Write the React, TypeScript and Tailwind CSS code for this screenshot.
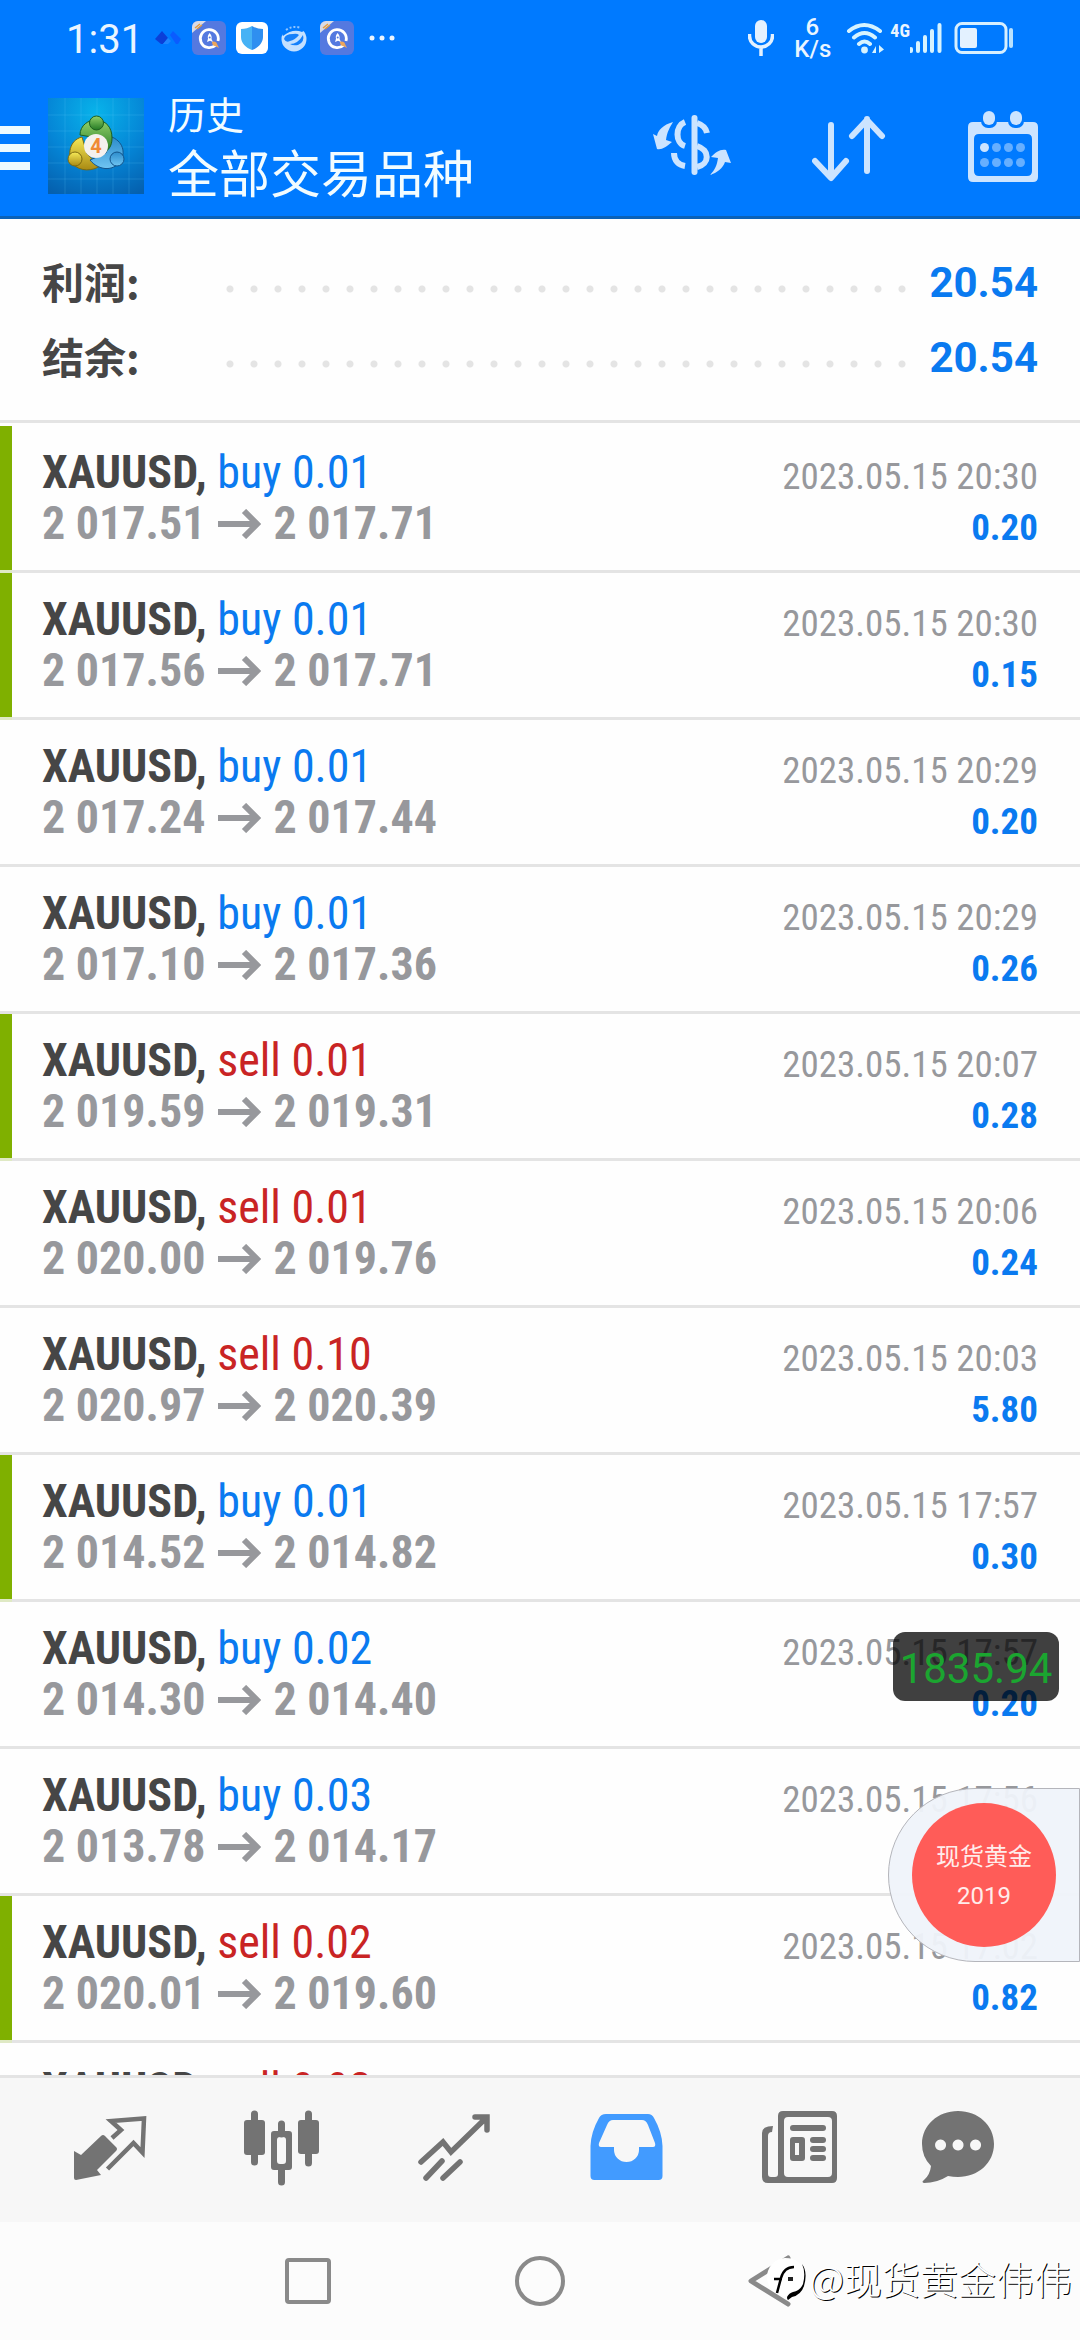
import type { ReactNode } from 'react';

type Deal = {
  side: 'buy' | 'sell';
  volume: string;
  open: string;
  close: string;
  time: string;
  profit: string;
  marked?: boolean;
};

const deals: Deal[] = [
  { side: 'buy', volume: '0.01', open: '2 017.51', close: '2 017.71', time: '2023.05.15 20:30', profit: '0.20', marked: true },
  { side: 'buy', volume: '0.01', open: '2 017.56', close: '2 017.71', time: '2023.05.15 20:30', profit: '0.15', marked: true },
  { side: 'buy', volume: '0.01', open: '2 017.24', close: '2 017.44', time: '2023.05.15 20:29', profit: '0.20' },
  { side: 'buy', volume: '0.01', open: '2 017.10', close: '2 017.36', time: '2023.05.15 20:29', profit: '0.26' },
  { side: 'sell', volume: '0.01', open: '2 019.59', close: '2 019.31', time: '2023.05.15 20:07', profit: '0.28', marked: true },
  { side: 'sell', volume: '0.01', open: '2 020.00', close: '2 019.76', time: '2023.05.15 20:06', profit: '0.24' },
  { side: 'sell', volume: '0.10', open: '2 020.97', close: '2 020.39', time: '2023.05.15 20:03', profit: '5.80' },
  { side: 'buy', volume: '0.01', open: '2 014.52', close: '2 014.82', time: '2023.05.15 17:57', profit: '0.30', marked: true },
  { side: 'buy', volume: '0.02', open: '2 014.30', close: '2 014.40', time: '2023.05.15 17:57', profit: '0.20' },
  { side: 'buy', volume: '0.03', open: '2 013.78', close: '2 014.17', time: '2023.05.15 17:56', profit: '' },
  { side: 'sell', volume: '0.02', open: '2 020.01', close: '2 019.60', time: '2023.05.15 17:02', profit: '0.82', marked: true },
  { side: 'sell', volume: '0.02', open: '', close: '', time: '', profit: '' },
];

function CleanerIcon() {
  return (
    <svg viewBox="0 0 34 34" className="size-[34px]">
      <rect width="34" height="34" rx="6" fill="#5479e0" />
      <path d="M0 6a6 6 0 0 1 6-6h8L0 12z" fill="#d9dbe6" />
      <path d="M3 7l5-4M5 8l5-4" stroke="#e39a3c" strokeWidth="1.4" />
      <path d="M23.500 24.200A9 9 0 1 1 26 20" fill="none" stroke="#fff" strokeWidth="2.800" />
      <path d="M17.500 12c2 2 2.500 4 2 6l1.500 3-3-1.200L15 21l1-3.200c-.6-2 0-4 1.500-5.800z" fill="#fff" />
      <circle cx="17.700" cy="16.500" r="1" fill="#5479e0" />
      <path d="M20 21c2-1 5 0 5 2l2 4-4-2c-2 0-3-2-3-4z" fill="#eda65b" />
    </svg>
  );
}

function StatusBar() {
  return (
    <div className="flex h-[76px] items-center pl-[66px] pr-[66px] text-[#eaf5ff]">
      <span className="w-[88px] pt-1 text-[40px] leading-[48px]">1:31</span>
      <div className="flex items-center gap-[10px]">
        <svg viewBox="0 0 28 16" className="h-4 w-7">
          <path d="M8 1l6 7-5 6H7L1 9z" fill="#0b3fd8" />
          <path d="M9 14l5-6 3 3-3 3z" fill="#1e86ff" />
          <path d="M16 5l3-4 8 8-3 5h-2z" fill="#0a5cff" />
        </svg>
        <CleanerIcon />
        <svg viewBox="0 0 32 32" className="size-8">
          <rect width="32" height="32" rx="6" fill="#fff" />
          <path d="M16 4c3 2 7 3 11 3v8c0 6-5 11-11 13z" fill="#2f8ff0" />
          <path d="M16 4C13 6 9 7 5 7v8c0 6 5 11 11 13z" fill="#46b2f5" />
        </svg>
        <svg viewBox="0 0 32 32" className="size-8">
          <circle cx="16" cy="17" r="12.500" fill="#c4e0ff" />
          <path d="M3 10C8 3 20 2 27 8l-3 2q-9-4-19 4z" fill="#007aff" />
          <path d="M8 8q7-5 15-2" fill="none" stroke="#8fc4ff" strokeWidth="2" strokeDasharray="2 2" />
          <path d="M6 17q1-5 9-5 4-1 6 1-4 5-9 6-4 2-6-2z" fill="#1580fb" />
          <path d="M25 13q2 7-5 10-5 1-8-1 8 0 13-9z" fill="#1580fb" />
        </svg>
        <CleanerIcon />
        <svg viewBox="0 0 28 8" className="ml-1 h-2 w-7" fill="#eaf5ff">
          <circle cx="4" cy="4" r="2.500" />
          <circle cx="14" cy="4" r="2.500" />
          <circle cx="24" cy="4" r="2.500" />
        </svg>
      </div>
      <div className="ml-auto flex items-center">
        <svg viewBox="0 0 26 36" className="mr-5 h-9 w-[26px]">
          <rect x="7" y="0" width="12" height="23" rx="6" fill="#e3f1ff" />
          <path d="M1.500 14v2a11.500 11 0 0 0 23 0v-2M13 27v9" fill="none" stroke="#e3f1ff" strokeWidth="3.500" />
        </svg>
        <div className="mr-4 flex w-9 flex-col text-center text-[24px] font-medium leading-[22px]">
          <span>6</span>
          <span>K/s</span>
        </div>
        <svg viewBox="0 0 40 32" className="h-8 w-10" fill="none" stroke="#d6f3ff" strokeWidth="4" strokeLinecap="round">
          <path d="M3 9q15-12 31 0M8 15.500q10.500-9 21 0M13 22q5.500-5 11 0" />
          <circle cx="18.500" cy="28" r="3.400" fill="#d6f3ff" stroke="none" />
          <path d="M30 24v7h-4zM33 31v-8l5 4.500zM30 23v8" fill="#d6f3ff" stroke="none" />
        </svg>
        <span className="ml-1 h-8 font-['Roboto_Condensed','Roboto',sans-serif] text-[18px] font-bold leading-[18px]">4G</span>
        <svg viewBox="0 0 32 32" className="mr-3 h-8 w-8" stroke="#d6f3ff" strokeWidth="4" strokeLinecap="round">
          <path d="M1 27v2M8 21v8M15 15v14M22 9v20M29.500 3v26" />
        </svg>
        <svg viewBox="0 0 60 34" className="h-[34px] w-[60px]">
          <rect x="2" y="2.500" width="50" height="29" rx="6" fill="none" stroke="#d6efff" strokeWidth="3" />
          <rect x="6" y="7" width="17" height="20" rx="2" fill="#e3f1ff" />
          <path d="M57 9v16" stroke="#b9e2ff" strokeWidth="4" strokeLinecap="round" />
        </svg>
      </div>
    </div>
  );
}

function AppLogo() {
  return (
    <svg viewBox="0 0 96 96" className="size-24">
      <defs>
        <radialGradient id="sky" cx="50%" cy="15%" r="95%">
          <stop offset="0" stopColor="#08b3ea" />
          <stop offset=".55" stopColor="#0585d6" />
          <stop offset="1" stopColor="#0560ae" />
        </radialGradient>
        <linearGradient id="green" x2="0" y2="1">
          <stop offset="0" stopColor="#93d26b" />
          <stop offset="1" stopColor="#237a24" />
        </linearGradient>
        <linearGradient id="gold" x2="0" y2="1">
          <stop offset="0" stopColor="#f6ea58" />
          <stop offset="1" stopColor="#a98a13" />
        </linearGradient>
        <linearGradient id="blue" x2="0" y2="1">
          <stop offset="0" stopColor="#2c8ccc" />
          <stop offset="1" stopColor="#6fc5f2" />
        </linearGradient>
      </defs>
      <rect width="96" height="96" fill="url(#sky)" />
      <path
        d="M0 17h96M0 33h96M0 49h96M0 65h96M0 81h96M17 0v96M33 0v96M49 0v96M65 0v96M81 0v96"
        stroke="#6fd0ff"
        strokeOpacity=".18"
      />
      <path d="M34 39C21 42 19 58 25 66c7 8 20 7 27 2L39 56z" fill="url(#gold)" stroke="#7c6a10" />
      <path d="M64 39c13 6 13 18 8 25-8 10-22 8-30-2l16-7z" fill="url(#blue)" stroke="#12548b" />
      <path d="M32 37c0-19 32-22 32 3 0 9-4 12-8 15l-6-15z" fill="url(#green)" stroke="#1d5f1f" />
      <circle cx="48.500" cy="25" r="7" fill="url(#green)" stroke="#1d5f1f" />
      <circle cx="27" cy="61" r="7" fill="url(#gold)" stroke="#7c6a10" />
      <circle cx="69" cy="61" r="7" fill="url(#blue)" stroke="#12548b" />
      <circle cx="48" cy="48" r="12" fill="#f4f1ee" />
      <text x="48" y="55" textAnchor="middle" fontSize="20" fontWeight="700" fill="#f08a35">
        4
      </text>
    </svg>
  );
}

function Header() {
  return (
    <header className="shrink-0 border-b-[3px] border-[#0b62b8] bg-[#007aff]">
      <StatusBar />
      <div className="flex h-[140px] items-center pr-[42px]">
        <button type="button" aria-label="菜单" className="flex w-[30px] flex-col gap-[10px] pt-1">
          <span className="h-2 bg-[#eefaff]" />
          <span className="h-2 bg-[#eefaff]" />
          <span className="h-2 bg-[#eefaff]" />
        </button>
        <div className="ml-[18px]">
          <AppLogo />
        </div>
        <div className="ml-6 flex flex-col pt-1 text-[#f2fcff]">
          <span className="text-[38px] leading-[56px]">历史</span>
          <h1 className="text-[51px] leading-[64px]">全部交易品种</h1>
        </div>
        <div className="ml-auto flex items-center gap-20">
          <button type="button" aria-label="货币">
            <svg viewBox="0 0 80 72" className="h-[72px] w-20" fill="none" stroke="#cce4ff" strokeWidth="6">
              <path d="M42.500 8v54" strokeLinecap="round" />
              <path d="M33 12c-10 4-10 21 0 24M22 43c0 8 5 12 11 13" />
              <path d="M45 13c6 2 9 5 10 10M45 36c13 4 13 18 0 21" />
              <path d="M21 12C11 15 6 20 5 26l-4-2 4 15c5 1 9-2 15-7l-6-2c1-8 4-13 7-18z" fill="#cce4ff" stroke="none" />
              <path d="M58 65c5-5 7-10 8-17l-7-1c5-5 9-8 15-7l5 13-6-1c-2 6-8 11-15 13z" fill="#cce4ff" stroke="none" />
            </svg>
          </button>
          <button type="button" aria-label="排序">
            <svg
              viewBox="0 0 76 72"
              className="h-[72px] w-[76px]"
              fill="none"
              stroke="#cce4ff"
              strokeWidth="6"
              strokeLinecap="round"
              strokeLinejoin="round"
            >
              <path d="M19 15v52M3 51l16 17 15-17M55 61V9M40 26l15-16 15 16" />
            </svg>
          </button>
          <button type="button" aria-label="日历">
            <svg viewBox="0 0 70 72" className="h-[72px] w-[70px]">
              <path
                d="M5 12h60q5 0 5 5v50q0 5-5 5H5q-5 0-5-5V17q0-5 5-5zm6 12q-5 0-5 5v32q0 5 5 5h48q5 0 5-5V29q0-5-5-5z"
                fill="#cce4ff"
                fillRule="evenodd"
              />
              <rect x="13" y="-2" width="16" height="20" rx="7" fill="#007aff" />
              <rect x="40" y="-2" width="16" height="20" rx="7" fill="#007aff" />
              <rect x="15" y="1" width="12" height="14" rx="6" fill="#cce4ff" />
              <rect x="42" y="1" width="12" height="14" rx="6" fill="#cce4ff" />
              <g fill="#66afff">
                <circle cx="16.500" cy="37.500" r="4.500" fill="#cce4ff" />
                <circle cx="28.500" cy="37.500" r="4.500" />
                <circle cx="40.500" cy="37.500" r="4.500" />
                <circle cx="52.500" cy="37.500" r="4.500" />
                <circle cx="16.500" cy="52.500" r="4.500" />
                <circle cx="28.500" cy="52.500" r="4.500" />
                <circle cx="40.500" cy="52.500" r="4.500" />
                <circle cx="52.500" cy="52.500" r="4.500" />
              </g>
            </svg>
          </button>
        </div>
      </div>
    </header>
  );
}

function SummaryRow({ label, value }: { label: string; value: string }) {
  return (
    <div className="flex h-[75px] items-center">
      <dt className="w-[176px] pb-1 font-['Noto_Sans_CJK_SC',sans-serif] text-[42px] font-bold leading-[60px] text-[#464646]">
        {label}
      </dt>
      <div className="mt-3 h-2 flex-1 bg-[radial-gradient(circle_at_center,#e4e4e4_3px,transparent_4px)] bg-[length:24px_8px]" />
      <dd className="ml-4 text-[42px] font-bold leading-[48px] text-[#0a7af0]">{value}</dd>
    </div>
  );
}

function DealRow({ deal }: { deal: Deal }) {
  return (
    <li className="flex h-[147px] shrink-0">
      <div
        className={
          deal.marked
            ? 'w-3 border-b-[3px] border-[#dfe9c4] bg-[#7fb000]'
            : 'w-3 border-b-[3px] border-[#e4e4e4]'
        }
      />
      <div className="flex flex-1 justify-between border-b-[3px] border-[#e4e4e4] pl-[30px] pr-[42px] pt-[21px] font-['Roboto_Condensed','Roboto',sans-serif]">
        <div className="flex flex-col text-[46px] leading-[51px]">
          <div>
            <span className="font-bold text-[#464646]">XAUUSD,</span>{' '}
            <span className={deal.side === 'buy' ? 'text-[#0a7af0]' : 'text-[#c92424]'}>
              {deal.side} {deal.volume}
            </span>
          </div>
          {deal.open && (
            <div className="flex items-center font-bold text-[#97989c]">
              <span>{deal.open}</span>
              <svg viewBox="0 0 44 30" className="mx-3 h-[30px] w-11" fill="none" stroke="currentColor" strokeWidth="6">
                <path d="M1 15h38M27 2l13 13-13 13" />
              </svg>
              <span>{deal.close}</span>
            </div>
          )}
        </div>
        <div className="flex flex-col pt-1 text-right text-[37px] leading-[51px]">
          <span className="text-[#97989c]">{deal.time}</span>
          <span className="font-bold text-[#0a7af0]">{deal.profit}</span>
        </div>
      </div>
    </li>
  );
}

function Tab({ label, active, children }: { label: string; active?: boolean; children: ReactNode }) {
  return (
    <button
      type="button"
      aria-label={label}
      className={active ? 'flex items-center justify-center text-[#429bff]' : 'flex items-center justify-center text-[#737373]'}
    >
      <svg viewBox="0 0 96 96" className="size-24" fill="currentColor">
        {children}
      </svg>
    </button>
  );
}

function TabBar() {
  return (
    <nav className="grid h-[147px] shrink-0 grid-cols-6 border-t-[3px] border-[#e4e4e4] bg-[#f7f7f7] px-6">
      <Tab label="行情">
        <path d="M12 49l7 4 20-19q2-2 4 0l11 11q2 2 0 4L35 68l4 5-25 5q-2 0-2-2z" />
        <path d="M50 36l9-8-10-9 33-2.500-1.500 34L71.500 41 45.500 67" fill="none" stroke="currentColor" strokeWidth="4.500" />
      </Tab>
      <Tab label="图表">
        <path d="M20.500 12v48M74.500 12v49M47.500 22v10M47.500 66v14" stroke="currentColor" strokeWidth="7" strokeLinecap="round" />
        <rect x="10" y="18" width="21" height="35" rx="3" />
        <rect x="64" y="18" width="21" height="34" rx="3" />
        <path d="M40 29h15q3 0 3 3v33q0 3-3 3H40q-3 0-3-3V32q0-3 3-3zm6 6q-3 0-3 3v21q0 3 3 3h3q3 0 3-3V38q0-3-3-3z" fillRule="evenodd" />
      </Tab>
      <Tab label="交易">
        <g fill="none" stroke="currentColor" strokeWidth="5.500" strokeLinecap="round">
          <path d="M15 60l22-20 8 10 35-34M69 15h12v13" />
          <path d="M20 76l16-17M37 76l17-16" />
        </g>
      </Tab>
      <Tab label="历史" active>
        <path
          d="M28 12h42q4 0 6 4 8 14 8.500 28v30q0 4-4 4h-64q-4 0-4-4V44Q13 30 21 16q2-4 7-4zm7 6q-4 0-6 5l-8 18q-1 4 2 4h13v3a12.500 12 0 0 0 25 0v-3h14q3 0 2-4l-7-18q-2-5-6-5z"
          fillRule="evenodd"
        />
      </Tab>
      <Tab label="新闻">
        <path
          d="M33 9h49q5 0 5 5v62q0 5-5 5H18q-6 0-6-6V31q0-7 11-7l-1 6q-4 0-4 4v38q0 3 3 3h4q3 0 3-3V14q0-5 5-5zm5 6q-4 0-4 4v52q0 4 4 4h40q4 0 4-4V19q0-4-4-4z"
          fillRule="evenodd"
        />
        <rect x="40" y="23" width="36" height="6" rx="3" />
        <rect x="60" y="35" width="16" height="6" rx="3" />
        <rect x="60" y="44" width="16" height="6" rx="3" />
        <rect x="60" y="53" width="16" height="6" rx="3" />
        <path d="M43 35h9q3 0 3 3v18q0 3-3 3h-9q-3 0-3-3V38q0-3 3-3zm2 6v12h4V41z" fillRule="evenodd" />
      </Tab>
      <Tab label="消息">
        <path
          d="M36 9c20 0 36 14 36 33S56 75 36 75q-5 0-10-1Q15 81 2 81q-3-1 0-3 6-5 7-14-9-9-9-22C0 23 16 9 36 9zM18.500 37.500a5.500 5.500 0 1 0 .1 0zm17.500 0a5.500 5.500 0 1 0 .1 0zm17.500 0a5.500 5.500 0 1 0 .1 0z"
          fillRule="evenodd"
        />
      </Tab>
    </nav>
  );
}

function SystemNav() {
  return (
    <div className="relative grid h-[118px] shrink-0 grid-cols-3 bg-[#fcfcfc] px-48">
      <button type="button" aria-label="最近任务" className="flex items-center justify-center">
        <span className="size-[46px] rounded-[4px] border-[4px] border-[#8a8a8a]" />
      </button>
      <button type="button" aria-label="主屏幕" className="flex items-center justify-center">
        <span className="size-[50px] rounded-full border-[4px] border-[#8a8a8a]" />
      </button>
      <button type="button" aria-label="返回" className="flex items-center justify-center">
        <svg viewBox="0 0 50 52" className="h-[52px] w-[50px]" fill="none" stroke="#8a8a8a" strokeWidth="5" strokeLinecap="round" strokeLinejoin="round">
          <path d="M41 3L4 26l37 23" />
        </svg>
      </button>
      <div className="absolute right-2 top-8 flex items-center">
        <svg viewBox="0 0 44 48" className="h-12 w-11">
          <path d="M20 4a19 19 0 1 0 2 38v4q15-4 17-20C41 12 33 4 20 4z" fill="#fff" />
          <path d="M37 10q4 8 1 20-3 7-10 8-4 1-6 5 0 3 1 3l4-3q9-2 12-11 4-14-2-22z" />
          <path d="M12 39l4-15q3-11 13-11M9 25h8" fill="none" stroke="#000" strokeWidth="2.500" />
          <rect x="23" y="23" width="5" height="4" fill="#222" />
        </svg>
        <span className="font-['Noto_Sans_CJK_SC',sans-serif] text-[38px] font-light leading-[44px] text-white [text-shadow:1px_1px_0_#000]">
          @现货黄金伟伟
        </span>
      </div>
    </div>
  );
}

export default function App() {
  return (
    <div className="flex h-screen flex-col overflow-hidden bg-[#fefefe] font-['Roboto','Noto_Sans_CJK_SC',sans-serif]">
      <Header />
      <main className="relative flex min-h-0 flex-1 flex-col overflow-hidden">
        <dl className="shrink-0 border-b-[3px] border-[#e4e4e4] px-[42px] pb-[25px] pt-[26px]">
          <SummaryRow label="利润:" value="20.54" />
          <SummaryRow label="结余:" value="20.54" />
        </dl>
        <ul className="flex flex-col pt-[3px]">
          {deals.map((deal, i) => (
            <DealRow key={i} deal={deal} />
          ))}
        </ul>

        {/* floating quote */}
        <div className="absolute bottom-[374px] right-[21px] flex h-[69px] w-[166px] items-center justify-center rounded-xl bg-black/75 pt-1 text-[42px] text-[#1ba530]">
          1835.94
        </div>
        {/* edge widget */}
        <div className="absolute bottom-[113px] right-0 flex h-[174px] w-48 items-center rounded-l-full border border-[#b4b5bb] bg-[#eff3fa]/95 pl-[23px]">
          <button
            type="button"
            className="flex size-36 flex-col items-center justify-center rounded-full bg-[#ff5c58] pt-1 text-[24px] leading-[39px] text-[#ffeceb]"
          >
            <span>现货黄金</span>
            <span>2019</span>
          </button>
        </div>
      </main>
      <TabBar />
      <SystemNav />
    </div>
  );
}
